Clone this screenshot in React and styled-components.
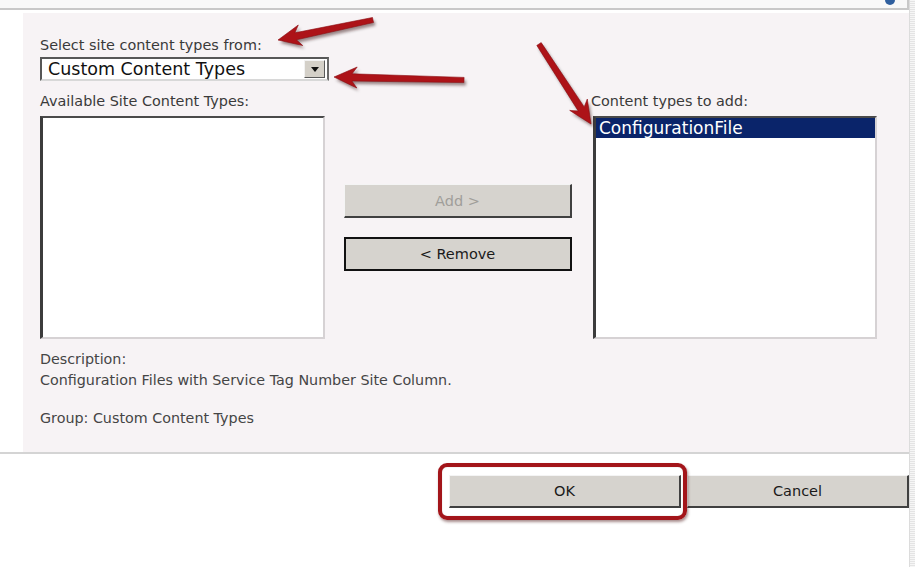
import React from 'react';
import styled, { createGlobalStyle } from 'styled-components';

const GlobalStyle = createGlobalStyle`
  html, body { margin: 0; padding: 0; background: #ffffff; }
  body { font-family: "DejaVu Sans", sans-serif; color: #3c3c3c; }
`;

const Page = styled.div`
  position: relative;
  width: 915px;
  height: 567px;
  display: flex;
  overflow: hidden;
`;

const Main = styled.div`
  width: 909px;
  display: flex;
  flex-direction: column;
`;

const ScrollStrip = styled.div`
  flex: 1;
  border-left: 1px solid #dcdcdc;
  background: repeating-linear-gradient(#f6f6f6 0 1px, #e4e4e4 1px 2px);
`;

const TopBar = styled.div`
  height: 8px;
  background: #f8f8f8;
  border-bottom: 2px solid #c8c8c8;
  border-right: 2px solid #c8c8c8;
  display: flex;
  justify-content: flex-end;
  padding-right: 12px;
`;

const Body = styled.div`
  display: flex;
  padding-top: 3px;
`;

const Gutter = styled.div`
  width: 23px;
  background: #ffffff;
`;

const Panel = styled.section`
  flex: 1;
  height: 439px;
  box-sizing: border-box;
  background: #f7f3f5;
  padding: 24px 0 0 17px;
`;

const Label = styled.div`
  font-size: 14.4px;
  line-height: 16px;
  color: #3a3a3a;
  white-space: nowrap;
`;

const SelectBox = styled.div`
  margin-top: 4px;
  width: 289px;
  height: 24px;
  box-sizing: border-box;
  background: #ffffff;
  border: 2px solid;
  border-color: #575757 #6a6a6a #d8d8d8 #575757;
  display: flex;
  align-items: center;
  justify-content: space-between;
  padding: 0 2px 0 6px;
  font-size: 17.5px;
  color: #111;
`;

const DropButton = styled.div`
  width: 21px;
  height: 18px;
  box-sizing: border-box;
  background: #d4d0c8;
  border: 1px solid;
  border-color: #f2f2f2 #5a5a5a #5a5a5a #f2f2f2;
  display: flex;
  align-items: center;
  justify-content: center;
`;

const Lists = styled.div`
  margin-top: 12px;
  display: grid;
  grid-template-columns: 285px 228px 286px;
  grid-template-rows: 16px 223px;
  column-gap: 19px;
  row-gap: 7px;
`;

const ListBox = styled.div`
  grid-row: 2;
  background: #ffffff;
  box-sizing: border-box;
  border-style: solid;
  border-width: 2px 2px 2px 3px;
  border-color: #4a4a4a #d6d2d4 #d6d2d4 #3c3c3c;
  margin-left: ${(p) => p.$left || 0}px;
`;

const ListItem = styled.div`
  height: 20px;
  line-height: 20px;
  padding-left: 3px;
  font-size: 17px;
  color: ${(p) => (p.$selected ? '#ffffff' : '#111')};
  background: ${(p) => (p.$selected ? '#0a246a' : 'transparent')};
`;

const MoveButtons = styled.div`
  grid-row: 2;
  grid-column: 2;
  align-self: center;
  display: flex;
  flex-direction: column;
  gap: 19px;
`;

const Button = styled.button`
  width: ${(p) => p.$width || 228}px;
  height: ${(p) => p.$height || 34}px;
  box-sizing: border-box;
  background: #d6d3ce;
  font-family: "DejaVu Sans", sans-serif;
  font-size: 14.5px;
  color: ${(p) => (p.disabled ? '#a09e9a' : '#1a1a1a')};
  border-style: solid;
  border-width: 1px 2px 2px 1px;
  border-color: #f4f4f4 #404040 #404040 #f4f4f4;
  outline: ${(p) => (p.$focused ? '2px solid #111' : 'none')};
  outline-offset: -2px;
  padding: 0;
  margin: 0;
`;

const DescBlock = styled.div`
  margin-top: 10px;
  font-size: 14.3px;
  line-height: 21px;
  color: #454545;
`;

const GroupLine = styled.div`
  margin-top: 17px;
`;

const Separator = styled.div`
  height: 2px;
  background: #d4d4d4;
`;

const Footer = styled.footer`
  position: relative;
  flex: 1;
  background: #ffffff;
  display: flex;
  justify-content: flex-end;
  align-items: flex-start;
  gap: 6px;
  padding-top: 21px;
`;

const Highlight = styled.div`
  position: absolute;
  left: 438px;
  top: 9px;
  width: 249px;
  height: 57px;
  box-sizing: border-box;
  border: 4px solid #a3151a;
  border-radius: 9px;
  box-shadow: 1px 2px 3px rgba(60, 0, 0, 0.45), inset 0 0 1px rgba(60, 0, 0, 0.4);
  pointer-events: none;
`;

const Overlay = styled.svg`
  position: absolute;
  left: 0;
  top: 0;
  pointer-events: none;
`;

function arrowPoints([x1, y1], [x2, y2]) {
  const headLen = 23;
  const headW = 10.5;
  const neck = 3.6;
  const tail = 2.6;
  const dx = x2 - x1;
  const dy = y2 - y1;
  const L = Math.hypot(dx, dy);
  const ux = dx / L;
  const uy = dy / L;
  const nx = -uy;
  const ny = ux;
  const bx = x2 - ux * headLen;
  const by = y2 - uy * headLen;
  const nkx = x2 - ux * (headLen - 5);
  const nky = y2 - uy * (headLen - 5);
  const pts = [
    [x1 + nx * tail, y1 + ny * tail],
    [nkx + nx * neck, nky + ny * neck],
    [bx + nx * headW, by + ny * headW],
    [x2, y2],
    [bx - nx * headW, by - ny * headW],
    [nkx - nx * neck, nky - ny * neck],
    [x1 - nx * tail, y1 - ny * tail],
  ];
  return pts.map((p) => p.map((v) => v.toFixed(1)).join(',')).join(' ');
}

const arrows = [
  [[373, 20], [278, 40]],
  [[464, 80], [334, 77]],
  [[539, 44], [591, 124]],
];

function Arrows() {
  return (
    <Overlay width="915" height="567" viewBox="0 0 915 567">
      <defs>
        <filter id="blur" x="-20%" y="-20%" width="140%" height="140%">
          <feGaussianBlur stdDeviation="1.6" />
        </filter>
      </defs>
      {arrows.map(([a, b], i) => (
        <g key={i}>
          <polygon
            points={arrowPoints([a[0] + 2, a[1] + 3], [b[0] + 2, b[1] + 3])}
            fill="rgba(40,0,0,0.45)"
            filter="url(#blur)"
          />
          <polygon points={arrowPoints(a, b)} fill="#ad1318" stroke="#8a0c10" strokeWidth="0.6" />
        </g>
      ))}
    </Overlay>
  );
}

export default function App() {
  return (
    <>
      <GlobalStyle />
      <Page>
        <Main>
          <TopBar>
            <svg width="10" height="5" viewBox="0 0 10 5">
              <path d="M0 0 H10 A5 5 0 0 1 0 0 Z" fill="#2f5f9e" />
            </svg>
          </TopBar>
          <Body>
            <Gutter />
            <Panel>
              <Label>Select site content types from:</Label>
              <SelectBox>
                <span>Custom Content Types</span>
                <DropButton>
                  <svg width="8" height="5" viewBox="0 0 8 5">
                    <path d="M0 0 H8 L4 5 Z" fill="#111" />
                  </svg>
                </DropButton>
              </SelectBox>
              <Lists>
                <Label>Available Site Content Types:</Label>
                <div />
                <Label>Content types to add:</Label>
                <ListBox />
                <MoveButtons>
                  <Button disabled>Add &gt;</Button>
                  <Button $focused>&lt; Remove</Button>
                </MoveButtons>
                <ListBox $left={2}>
                  <ListItem $selected>ConfigurationFile</ListItem>
                </ListBox>
              </Lists>
              <DescBlock>
                <div>Description:</div>
                <div>Configuration Files with Service Tag Number Site Column.</div>
                <GroupLine>Group: Custom Content Types</GroupLine>
              </DescBlock>
            </Panel>
          </Body>
          <Separator />
          <Footer>
            <Button $width={232} $height={33}>OK</Button>
            <Button $width={222} $height={33}>Cancel</Button>
            <Highlight />
          </Footer>
        </Main>
        <ScrollStrip />
        <Arrows />
      </Page>
    </>
  );
}
